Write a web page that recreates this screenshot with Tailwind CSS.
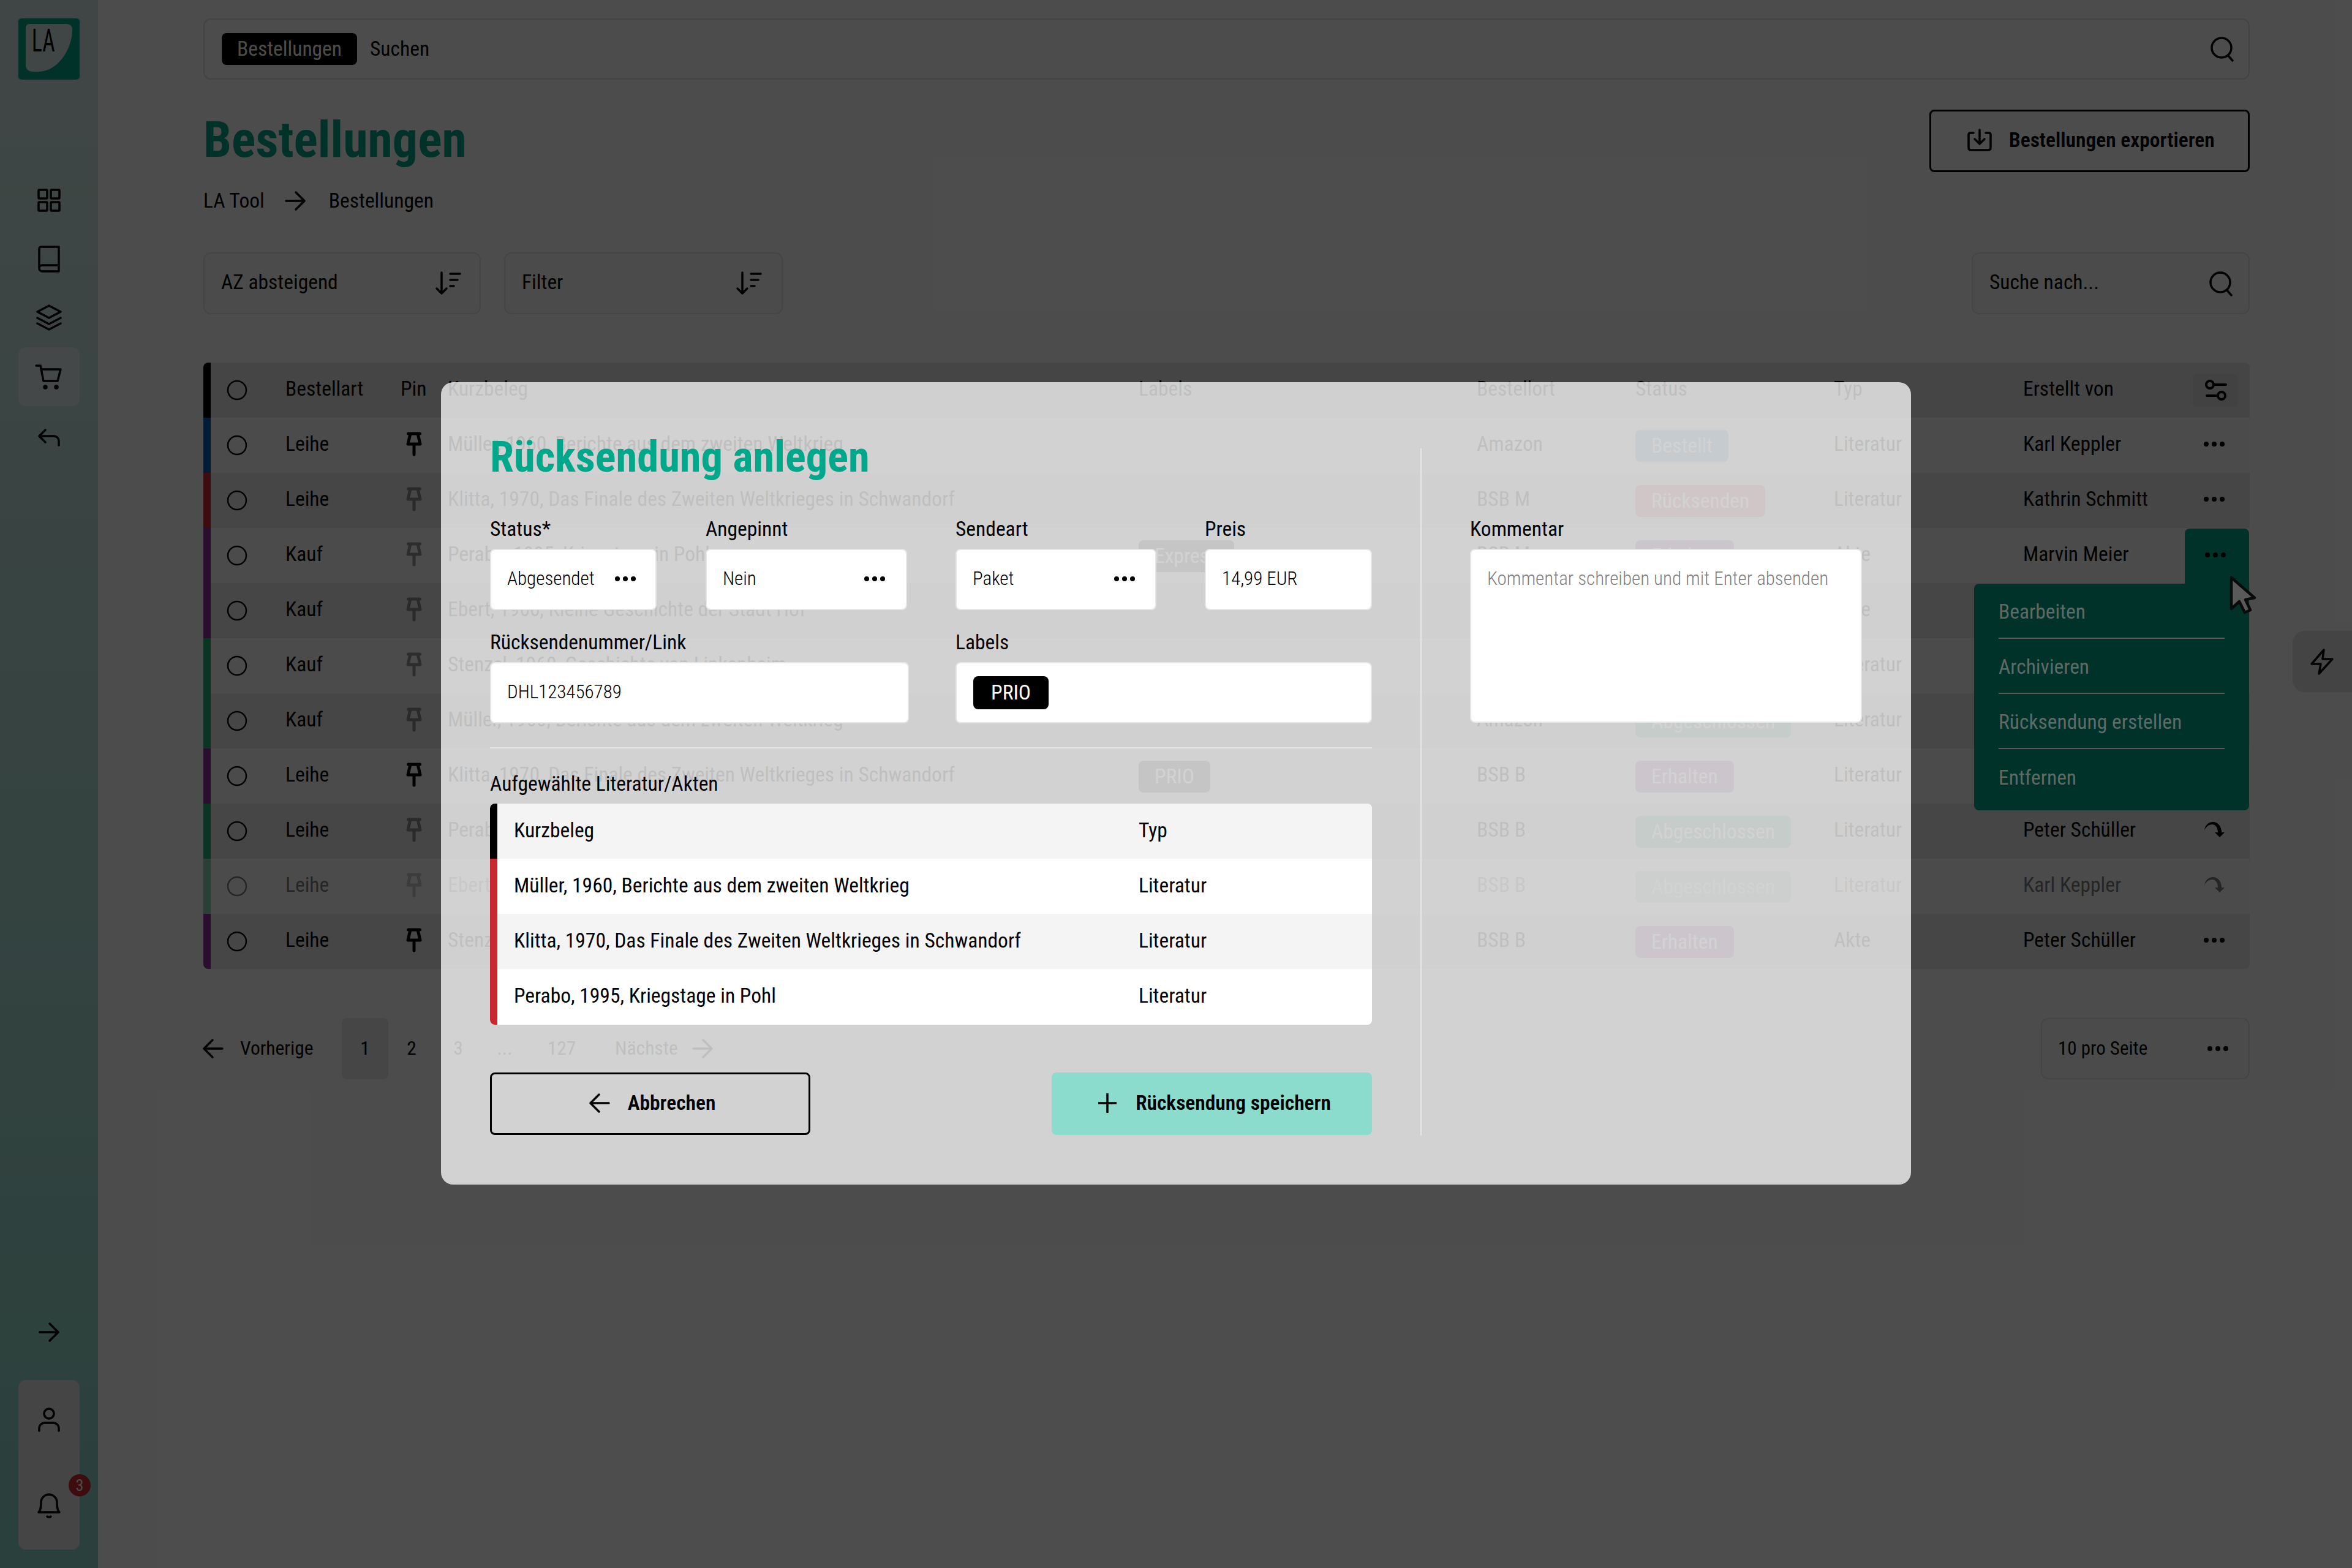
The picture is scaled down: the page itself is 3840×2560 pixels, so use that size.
<!doctype html>
<html><head><meta charset="utf-8"><script src="https://cdn.jsdelivr.net/npm/@tailwindcss/browser@4"></script></head>
<body class="bg-white">
<svg class="hidden">
<symbol id="dots" viewBox="0 0 48 48"><circle cx="11" cy="24" r="4"/><circle cx="24" cy="24" r="4"/><circle cx="37" cy="24" r="4"/></symbol>
<symbol id="pin" viewBox="0 0 48 48"><path d="M14.5 7H33.5M18 7L14 24H34L30 7M24 24V41" fill="none" stroke="currentColor" stroke-width="5" stroke-linecap="round" stroke-linejoin="round"/></symbol>
<symbol id="radio" viewBox="0 0 48 48"><circle cx="24" cy="24" r="15" fill="none" stroke="currentColor" stroke-width="2.5"/></symbol>
<symbol id="search" viewBox="0 0 48 48"><circle cx="22" cy="22" r="16" fill="none" stroke="currentColor" stroke-width="3.5"/><path d="M33 35L40 43" fill="none" stroke="currentColor" stroke-width="3.5" stroke-linecap="round"/></symbol>
<symbol id="sort" viewBox="0 0 48 48"><path d="M14 6V40M6 32L14 40L22 32M28 8H44M28 18H40M28 28H34" fill="none" stroke="currentColor" stroke-width="3.5" stroke-linecap="round" stroke-linejoin="round"/></symbol>
<symbol id="right" viewBox="0 0 48 48"><path d="M9 24H39M25 10L39 24L25 38" fill="none" stroke="currentColor" stroke-width="3.5" stroke-linecap="round" stroke-linejoin="round"/></symbol>
<symbol id="left" viewBox="0 0 48 48"><path d="M39 24H9M23 10L9 24L23 38" fill="none" stroke="currentColor" stroke-width="3.5" stroke-linecap="round" stroke-linejoin="round"/></symbol>
<symbol id="spin" viewBox="0 0 48 48"><path d="M9 25C10 15 17 11 23 11C31 11 37 18 37 28H42L34 36L26 28H31C31 20 27 15 22 15C16 15 11 19 9 25Z"/></symbol>
</svg>
<div class="relative w-[3840px] h-[2560px] overflow-hidden flex bg-white text-black text-[33.5px] leading-[40px] [font-family:Roboto,sans-serif] [font-stretch:75%]">

<!-- sidebar -->
<aside class="w-[160px] shrink-0 h-full bg-linear-to-b from-[#d8ecea] to-[#8cd6c8] flex flex-col items-center pt-[30px] pb-[30px]">
  <div class="w-[100px] h-[100px] bg-[#00a88c] rounded-[5px] relative shrink-0">
    <svg class="w-[100px] h-[100px]" viewBox="0 0 100 100"><path d="M19 9H78Q88 9 88 19C88 50 64 87 33 87H24Q12 87 12 75V16Q12 9 19 9Z" fill="#d8ecea"/></svg>
    <span class="absolute left-[22px] top-[15px] text-[52px] leading-[44px] origin-left scale-x-[0.68] [font-stretch:75%]">LA</span>
  </div>
  <nav class="flex flex-col items-center mt-[149px] w-[100px]">
    <div class="h-[96px] flex items-center justify-center"><svg class="w-[48px] h-[48px]" viewBox="0 0 48 48" fill="none" stroke="currentColor" stroke-width="3.5" stroke-linejoin="round"><rect x="7" y="7" width="14" height="14" rx="1"/><rect x="27" y="7" width="14" height="14" rx="1"/><rect x="7" y="27" width="14" height="14" rx="1"/><rect x="27" y="27" width="14" height="14" rx="1"/></svg></div>
    <div class="h-[96px] flex items-center justify-center"><svg class="w-[48px] h-[48px]" viewBox="0 0 48 48" fill="none" stroke="currentColor" stroke-width="3.5" stroke-linejoin="round"><path d="M8 39V7a3 3 0 0 1 3-3H40V44H13A5 5 0 0 1 8 39A5 5 0 0 1 13 34H40"/></svg></div>
    <div class="h-[96px] flex items-center justify-center"><svg class="w-[48px] h-[48px]" viewBox="0 0 48 48" fill="none" stroke="currentColor" stroke-width="3.5" stroke-linejoin="round" stroke-linecap="round"><path d="M24 4L43 14L24 24L5 14ZM5 24L24 34L43 24M5 33L24 43L43 33"/></svg></div>
    <div class="h-[96px] w-[100px] rounded-[12px] bg-[#e8f2f0] flex items-center justify-center"><svg class="w-[48px] h-[48px]" viewBox="0 0 48 48" fill="none" stroke="currentColor" stroke-width="3.5" stroke-linejoin="round" stroke-linecap="round"><path d="M3 6H10L15 31H38L43 12H11"/><circle cx="18" cy="41" r="2"/><circle cx="36" cy="41" r="2"/></svg></div>
    <div class="h-[104px] flex items-center justify-center"><svg class="w-[48px] h-[48px]" viewBox="0 0 48 48" fill="none" stroke="currentColor" stroke-width="3.5" stroke-linejoin="round" stroke-linecap="round"><path d="M18 11L8 21L18 31M8 21H32A8 8 0 0 1 40 29V36"/></svg></div>
  </nav>
  <div class="mt-auto flex items-center justify-center h-[48px] mb-[54px]"><svg class="w-[48px] h-[48px]"><use href="#right"/></svg></div>
  <div class="relative w-[100px] h-[277px] rounded-[12px] bg-[#e6e6e6] flex flex-col items-center shrink-0">
    <svg class="w-[48px] h-[48px] mt-[41px]" viewBox="0 0 48 48" fill="none" stroke="currentColor" stroke-width="3.5" stroke-linecap="round"><circle cx="24" cy="14" r="8"/><path d="M8 42V38A9 9 0 0 1 17 29H31A9 9 0 0 1 40 38V42"/></svg>
    <svg class="w-[48px] h-[48px] mt-[91px]" viewBox="0 0 48 48" fill="none" stroke="currentColor" stroke-width="3.5" stroke-linecap="round" stroke-linejoin="round"><path d="M7 36H41C37 32 37 26 37 20A13 13 0 0 0 11 20C11 26 11 32 7 36ZM21 43Q24 45 27 43"/></svg>
    <span class="absolute left-[82px] top-[154px] w-[36px] h-[36px] rounded-full bg-[#c8282f] text-white text-[26px] leading-[36px] text-center">3</span>
  </div>
</aside>

<!-- main -->
<main class="flex-1 relative pl-[172px] pr-[167px] pt-[30px]">
  <div class="h-[100px] border-[2px] border-[#e2e2e2] rounded-[12px] flex items-center pl-[28px] pr-[18px]">
    <span class="h-[52px] w-[221px] bg-black text-white rounded-[8px] flex items-center justify-center">Bestellungen</span>
    <span class="ml-[21px]">Suchen</span>
    <svg class="ml-auto w-[48px] h-[48px]"><use href="#search"/></svg>
  </div>
  <div class="flex justify-between mt-[49px] h-[102px]">
    <h1 class="text-[82px] leading-[98px] font-bold text-[#00a88c] [font-stretch:75%]">Bestellungen</h1>
    <button class="w-[523px] h-[102px] border-[3px] border-black rounded-[8px] flex items-center pl-[55px] gap-[24px] font-semibold pb-[2px]">
      <svg class="w-[48px] h-[48px]" viewBox="0 0 48 48" fill="none" stroke="currentColor" stroke-width="3.5" stroke-linecap="round" stroke-linejoin="round"><path d="M14 12H9Q6 12 6 15V36Q6 40 10 40H38Q42 40 42 36V15Q42 12 39 12H34M24 7V30M16 22L24 30L32 22"/></svg>Bestellungen exportieren</button>
  </div>
  <div class="flex items-center mt-[27px] h-[40px]">
    <span>LA Tool</span><svg class="w-[48px] h-[48px] ml-[26px] mr-[31px]"><use href="#right"/></svg><span>Bestellungen</span>
  </div>
  <div class="flex mt-[64px] h-[101px] gap-[38px]">
    <div class="w-[453px] bg-[#fafafa] border-[2px] border-[#e8e8e8] rounded-[12px] flex items-center justify-between pl-[27px] pr-[28px]"><span class="pb-[4px]">AZ absteigend</span><svg class="w-[48px] h-[48px]"><use href="#sort"/></svg></div>
    <div class="w-[455px] bg-[#fafafa] border-[2px] border-[#e8e8e8] rounded-[12px] flex items-center justify-between pl-[27px] pr-[30px]"><span class="pb-[4px]">Filter</span><svg class="w-[48px] h-[48px]"><use href="#sort"/></svg></div>
    <div class="ml-auto w-[454px] bg-[#fafafa] border-[2px] border-[#e8e8e8] rounded-[12px] flex items-center justify-between pl-[27px] pr-[20px]"><span class="pb-[4px]">Suche nach...</span><svg class="w-[48px] h-[48px]"><use href="#search"/></svg></div>
  </div>

  <!-- table -->
  <div class="relative mt-[79px] rounded-[8px] overflow-hidden">
    <div class="h-[90px] flex items-center pb-[4px] bg-[#e6e6e6] border-l-[12px] border-black"><div class="w-full grid items-center grid-cols-[28px_94px_188px_77px_1128px_552px_259px_324px_309px_264px_1fr]"><i></i><svg class="w-[48px] h-[48px] -ml-[9px] mt-[3px]"><use href="#radio"/></svg><span>Bestellart</span><span>Pin</span><span>Kurzbeleg</span><span>Labels</span><span>Bestellort</span><span>Status</span><span>Typ</span><span>Erstellt von</span><span class="ml-[13px] w-[74px] h-[54px] bg-[#dedede] rounded-[6px] flex items-center justify-center mt-[3px]"><svg class="w-[48px] h-[48px]" viewBox="0 0 48 48" fill="none" stroke="currentColor" stroke-width="4" stroke-linecap="round"><path d="M21 15H41M10 33H28"/><circle cx="15" cy="15" r="6"/><circle cx="34" cy="33" r="6"/></svg></span></div></div>

    <div class="h-[90px] flex items-center pb-[4px] bg-[#fbfbfb] border-l-[12px] border-[#005daa]"><div class="w-full grid items-center grid-cols-[28px_94px_188px_77px_1128px_552px_259px_324px_309px_264px_1fr]"><i></i><svg class="w-[48px] h-[48px] -ml-[9px] mt-[3px]"><use href="#radio"/></svg><span>Leihe</span><svg class="w-[48px] h-[48px] -ml-[2px]"><use href="#pin"/></svg><span>Müller, 1960, Berichte aus dem zweiten Weltkrieg</span><span></span><span>Amazon</span><span class="w-fit h-[52px] px-[26px] mt-[5px] rounded-[8px] bg-[#64a4d8] text-white flex items-center">Bestellt</span><span>Literatur</span><span>Karl Keppler</span><svg class="w-[48px] h-[48px] ml-[24px]"><use href="#dots"/></svg></div></div>

    <div class="h-[90px] flex items-center pb-[4px] bg-[#ececec] border-l-[12px] border-[#c8282f]"><div class="w-full grid items-center grid-cols-[28px_94px_188px_77px_1128px_552px_259px_324px_309px_264px_1fr]"><i></i><svg class="w-[48px] h-[48px] -ml-[9px] mt-[3px]"><use href="#radio"/></svg><span>Leihe</span><svg class="w-[48px] h-[48px] -ml-[2px] opacity-40"><use href="#pin"/></svg><span>Klitta, 1970, Das Finale des Zweiten Weltkrieges in Schwandorf</span><span></span><span>BSB M</span><span class="w-fit h-[52px] px-[26px] mt-[5px] rounded-[8px] bg-[#e0686f] text-white flex items-center">Rücksenden</span><span>Literatur</span><span>Kathrin Schmitt</span><svg class="w-[48px] h-[48px] ml-[24px]"><use href="#dots"/></svg></div></div>

    <div class="h-[90px] flex items-center pb-[4px] bg-[#fbfbfb] border-l-[12px] border-[#8c2f96]"><div class="w-full grid items-center grid-cols-[28px_94px_188px_77px_1128px_552px_259px_324px_309px_264px_1fr]"><i></i><svg class="w-[48px] h-[48px] -ml-[9px] mt-[3px]"><use href="#radio"/></svg><span>Kauf</span><svg class="w-[48px] h-[48px] -ml-[2px] opacity-40"><use href="#pin"/></svg><span>Perabo, 1995, Kriegstage in Pohl</span><span class="w-fit h-[52px] px-[26px] mt-[5px] rounded-[8px] bg-[#5d5d5d] text-white flex items-center">Express</span><span>BSB M</span><span class="w-fit h-[52px] px-[26px] mt-[5px] rounded-[8px] bg-[#b060b0] text-white flex items-center">Erhalten</span><span>Akte</span><span>Marvin Meier</span><span></span></div></div>

    <div class="h-[90px] flex items-center pb-[4px] bg-[#ececec] border-l-[12px] border-[#8c2f96]"><div class="w-full grid items-center grid-cols-[28px_94px_188px_77px_1128px_552px_259px_324px_309px_264px_1fr]"><i></i><svg class="w-[48px] h-[48px] -ml-[9px] mt-[3px]"><use href="#radio"/></svg><span>Kauf</span><svg class="w-[48px] h-[48px] -ml-[2px] opacity-40"><use href="#pin"/></svg><span>Ebert, 1966, Kleine Geschichte der Stadt Hof</span><span></span><span>BSB M</span><span></span><span>Akte</span><span></span><span></span></div></div>

    <div class="h-[90px] flex items-center pb-[4px] bg-[#fbfbfb] border-l-[12px] border-[#22b178]"><div class="w-full grid items-center grid-cols-[28px_94px_188px_77px_1128px_552px_259px_324px_309px_264px_1fr]"><i></i><svg class="w-[48px] h-[48px] -ml-[9px] mt-[3px]"><use href="#radio"/></svg><span>Kauf</span><svg class="w-[48px] h-[48px] -ml-[2px] opacity-40"><use href="#pin"/></svg><span>Stenzel, 1960, Geschichte von Linkenheim</span><span></span><span></span><span></span><span>Literatur</span><span></span><span></span></div></div>

    <div class="h-[90px] flex items-center pb-[4px] bg-[#ececec] border-l-[12px] border-[#22b178]"><div class="w-full grid items-center grid-cols-[28px_94px_188px_77px_1128px_552px_259px_324px_309px_264px_1fr]"><i></i><svg class="w-[48px] h-[48px] -ml-[9px] mt-[3px]"><use href="#radio"/></svg><span>Kauf</span><svg class="w-[48px] h-[48px] -ml-[2px] opacity-40"><use href="#pin"/></svg><span>Müller, 1960, Berichte aus dem zweiten Weltkrieg</span><span></span><span>Amazon</span><span class="w-fit h-[52px] px-[26px] mt-[5px] rounded-[8px] bg-[#64b492] text-white flex items-center">Abgeschlossen</span><span>Literatur</span><span></span><span></span></div></div>

    <div class="h-[90px] flex items-center pb-[4px] bg-[#fbfbfb] border-l-[12px] border-[#8c2f96]"><div class="w-full grid items-center grid-cols-[28px_94px_188px_77px_1128px_552px_259px_324px_309px_264px_1fr]"><i></i><svg class="w-[48px] h-[48px] -ml-[9px] mt-[3px]"><use href="#radio"/></svg><span>Leihe</span><svg class="w-[48px] h-[48px] -ml-[2px]"><use href="#pin"/></svg><span>Klitta, 1970, Das Finale des Zweiten Weltkrieges in Schwandorf</span><span class="w-fit h-[52px] px-[26px] mt-[5px] rounded-[8px] bg-[#5d5d5d] text-white flex items-center">PRIO</span><span>BSB B</span><span class="w-fit h-[52px] px-[26px] mt-[5px] rounded-[8px] bg-[#b060b0] text-white flex items-center">Erhalten</span><span>Literatur</span><span></span><span></span></div></div>

    <div class="h-[90px] flex items-center pb-[4px] bg-[#ececec] border-l-[12px] border-[#22b178]"><div class="w-full grid items-center grid-cols-[28px_94px_188px_77px_1128px_552px_259px_324px_309px_264px_1fr]"><i></i><svg class="w-[48px] h-[48px] -ml-[9px] mt-[3px]"><use href="#radio"/></svg><span>Leihe</span><svg class="w-[48px] h-[48px] -ml-[2px] opacity-40"><use href="#pin"/></svg><span>Perabo, 1995, Kriegstage in Pohl</span><span></span><span>BSB B</span><span class="w-fit h-[52px] px-[26px] mt-[5px] rounded-[8px] bg-[#64b492] text-white flex items-center">Abgeschlossen</span><span>Literatur</span><span>Peter Schüller</span><svg class="w-[48px] h-[48px] ml-[23px]"><use href="#spin"/></svg></div></div>

    <div class="h-[90px] flex items-center pb-[4px] bg-[#fbfbfb] border-l-[12px] border-[#8ed3b6]"><div class="w-full grid items-center grid-cols-[28px_94px_188px_77px_1128px_552px_259px_324px_309px_264px_1fr] opacity-50"><i></i><svg class="w-[48px] h-[48px] -ml-[9px] mt-[3px]"><use href="#radio"/></svg><span>Leihe</span><svg class="w-[48px] h-[48px] -ml-[2px] opacity-40"><use href="#pin"/></svg><span>Ebert, 1966, Kleine Geschichte der Stadt Hof</span><span></span><span>BSB B</span><span class="w-fit h-[52px] px-[26px] mt-[5px] rounded-[8px] bg-[#64b492] text-white flex items-center">Abgeschlossen</span><span>Literatur</span><span>Karl Keppler</span><svg class="w-[48px] h-[48px] ml-[23px]"><use href="#spin"/></svg></div></div>

    <div class="h-[90px] flex items-center pb-[4px] bg-[#ececec] border-l-[12px] border-[#8c2f96]"><div class="w-full grid items-center grid-cols-[28px_94px_188px_77px_1128px_552px_259px_324px_309px_264px_1fr]"><i></i><svg class="w-[48px] h-[48px] -ml-[9px] mt-[3px]"><use href="#radio"/></svg><span>Leihe</span><svg class="w-[48px] h-[48px] -ml-[2px]"><use href="#pin"/></svg><span>Stenzel, 1960, Geschichte von Linkenheim</span><span></span><span>BSB B</span><span class="w-fit h-[52px] px-[26px] mt-[5px] rounded-[8px] bg-[#b060b0] text-white flex items-center">Erhalten</span><span>Akte</span><span>Peter Schüller</span><svg class="w-[48px] h-[48px] ml-[24px]"><use href="#dots"/></svg></div></div>
  </div>

  <!-- pagination -->
  <div class="flex items-center mt-[80px] h-[100px] text-[31.5px]">
    <svg class="w-[48px] h-[48px] -ml-[8px]"><use href="#left"/></svg>
    <span class="ml-[20px] w-[166px]">Vorherige</span>
    <span class="w-[76px] h-[100px] bg-[#eaeaea] rounded-[8px] flex items-center justify-center">1</span>
    <span class="w-[76px] text-center">2</span>
    <span class="w-[76px] text-center">3</span>
    <span class="w-[76px] text-center">...</span>
    <span class="w-[110px] text-center">127</span>
    <span class="ml-[32px]">Nächste</span>
    <svg class="w-[48px] h-[48px] ml-[16px]"><use href="#right"/></svg>
    <div class="ml-auto w-[341px] h-[100px] bg-[#fafafa] border-[2px] border-[#e8e8e8] rounded-[12px] flex items-center justify-between pl-[26px] pr-[26px] text-[31px]"><span>10 pro Seite</span><svg class="w-[48px] h-[48px]"><use href="#dots"/></svg></div>
  </div>
</main>

<!-- lightning tab -->
<div class="absolute right-0 top-[1030px] w-[97px] h-[100px] bg-[#e4e4e4] rounded-l-[20px] flex items-center pl-[24px]">
  <svg class="w-[48px] h-[48px]" viewBox="0 0 48 48" fill="none" stroke="currentColor" stroke-width="3.5" stroke-linejoin="round" stroke-linecap="round"><path d="M27 5L7 28H22L19 44L41 20H25Z"/></svg>
</div>

<!-- overlay -->
<div class="absolute inset-0 bg-black/70"></div>

<!-- row action & menu, above the scrim -->
<div class="absolute left-[3223px] top-[863px] w-[449px] h-[460px] flex flex-col items-end text-[#5d6b67]">
  <div class="w-[105px] h-[90px] bg-[#00322a] rounded-t-[8px] flex items-center justify-center pb-[4px]"><svg class="w-[48px] h-[48px] -ml-[6px]"><use href="#dots"/></svg></div>
  <div class="w-full h-[370px] bg-[#00322a] rounded-b-[8px] rounded-tl-[8px] px-[40px] flex flex-col">
    <div class="h-[90px] pt-[3px] flex items-center border-b-[2px] border-[#5a5a5a]">Bearbeiten</div>
    <div class="h-[90px] pt-[3px] flex items-center border-b-[2px] border-[#5a5a5a]">Archivieren</div>
    <div class="h-[90px] pt-[3px] flex items-center border-b-[2px] border-[#5a5a5a]">Rücksendung erstellen</div>
    <div class="h-[90px] pt-[3px] flex items-center">Entfernen</div>
  </div>
</div>
<svg class="absolute left-[3636px] top-[938px] w-[48px] h-[66px]" viewBox="0 0 48 66" fill="#5a5a5a" stroke="#0a0a0a" stroke-width="4.5" stroke-linejoin="round"><path d="M7 5V56L20 44L29 62L38 58L30 41L45 38Z"/></svg>

<!-- modal -->
<div class="absolute left-[720px] top-[624px] w-[2400px] h-[1310px] bg-white/75 rounded-[20px] p-[80px] flex">
  <div class="w-[1440px] shrink-0">
    <h2 class="text-[70.5px] leading-[80px] font-bold text-[#00a88b] [font-stretch:75%] pt-[2px] h-[80px]">Rücksendung anlegen</h2>
    <div class="flex mt-[60px]">
      <label class="w-[272px] mr-[80px]"><div class="h-[40px] mb-[12px]">Status*</div><div class="h-[100px] bg-white border-[2px] border-[#e6e6e6] rounded-[8px] flex items-center justify-between pl-[26px] pr-[25px] text-[31px] pb-[2px]"><span class="font-light">Abgesendet</span><svg class="w-[48px] h-[48px]"><use href="#dots"/></svg></div></label>
      <label class="w-[329px] mr-[79px]"><div class="h-[40px] mb-[12px]">Angepinnt</div><div class="h-[100px] bg-white border-[2px] border-[#e6e6e6] rounded-[8px] flex items-center justify-between pl-[26px] pr-[27px] text-[31px] pb-[2px]"><span class="font-light">Nein</span><svg class="w-[48px] h-[48px]"><use href="#dots"/></svg></div></label>
      <label class="w-[328px] mr-[79px]"><div class="h-[40px] mb-[12px]">Sendeart</div><div class="h-[100px] bg-white border-[2px] border-[#e6e6e6] rounded-[8px] flex items-center justify-between pl-[26px] pr-[26px] text-[31px] pb-[2px]"><span class="font-light">Paket</span><svg class="w-[48px] h-[48px]"><use href="#dots"/></svg></div></label>
      <label class="w-[273px]"><div class="h-[40px] mb-[12px]">Preis</div><div class="h-[100px] bg-white border-[2px] border-[#e6e6e6] rounded-[8px] flex items-center pl-[26px] pr-[20px] text-[31px] pb-[2px]"><span class="font-light">14,99 EUR</span></div></label>
    </div>
    <div class="flex mt-[33px]">
      <label class="w-[684px] mr-[76px]"><div class="h-[40px] mb-[12px]">Rücksendenummer/Link</div><div class="h-[100px] bg-white border-[2px] border-[#e6e6e6] rounded-[8px] flex items-center pl-[26px] text-[31px] pb-[2px]"><span class="font-light">DHL123456789</span></div></label>
      <label class="w-[680px]"><div class="h-[40px] mb-[12px]">Labels</div><div class="h-[100px] bg-white border-[2px] border-[#e6e6e6] rounded-[8px] flex items-center pl-[27px]"><span class="w-[123px] h-[54px] bg-black text-white rounded-[8px] flex items-center justify-center">PRIO</span></div></label>
    </div>
    <div class="h-[2px] bg-[#e6e6e6] mt-[39px]"></div>
    <div class="h-[40px] mt-[38px] mb-[12px]">Aufgewählte Literatur/Akten</div>
    <div class="rounded-[8px] overflow-hidden h-[361px] bg-white">
      <div class="h-[90px] pb-[3px] bg-[#f4f4f4] border-l-[12px] border-black flex items-center pl-[27px]"><span class="w-[1020px]">Kurzbeleg</span><span>Typ</span></div>
      <div class="h-[90px] pb-[3px] bg-white border-l-[12px] border-[#c8282f] flex items-center pl-[27px]"><span class="w-[1020px]">Müller, 1960, Berichte aus dem zweiten Weltkrieg</span><span>Literatur</span></div>
      <div class="h-[90px] pb-[3px] bg-[#f4f4f4] border-l-[12px] border-[#c8282f] flex items-center pl-[27px]"><span class="w-[1020px]">Klitta, 1970, Das Finale des Zweiten Weltkrieges in Schwandorf</span><span>Literatur</span></div>
      <div class="h-[91px] pb-[3px] bg-white border-l-[12px] border-[#c8282f] flex items-center pl-[27px]"><span class="w-[1020px]">Perabo, 1995, Kriegstage in Pohl</span><span>Literatur</span></div>
    </div>
    <div class="flex justify-between mt-[78px]">
      <button class="w-[523px] h-[102px] border-[3px] border-black rounded-[8px] flex items-center justify-center gap-[22px] font-semibold pb-[2px]"><svg class="w-[48px] h-[48px]"><use href="#left"/></svg>Abbrechen</button>
      <button class="w-[523px] h-[102px] bg-[#8cdccd] rounded-[8px] flex items-center justify-center gap-[26px] font-semibold pb-[2px] pl-[4px]"><svg class="w-[40px] h-[40px]" viewBox="0 0 40 40" fill="none" stroke="currentColor" stroke-width="3.5"><path d="M20 4V36M5 20H35"/></svg>Rücksendung speichern</button>
    </div>
  </div>
  <div class="w-[2px] bg-[#e6e6e6] mt-[28px] mx-[79px] shrink-0"></div>
  <div class="flex-1 pt-[140px]">
    <div class="h-[40px] mb-[12px]">Kommentar</div>
    <div class="h-[284px] bg-white border-[2px] border-[#e6e6e6] rounded-[8px] pl-[26px] pr-[20px] pt-[27px] text-[31px] font-light text-[#808080]">Kommentar schreiben und mit Enter absenden</div>
  </div>
</div>
</div>
</body></html>
